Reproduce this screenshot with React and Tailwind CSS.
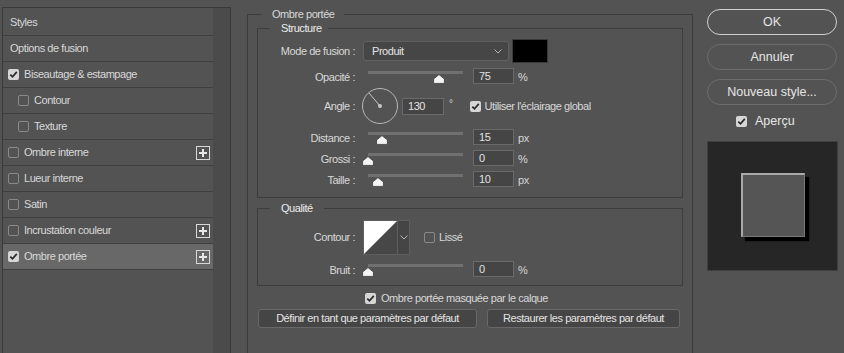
import React from "react";

const LINE = "border-[#3d3d3d]";

function Check({ checked }) {
  if (checked) {
    return (
      <span className="inline-flex w-[11px] h-[11px] shrink-0 items-center justify-center rounded-[2px] bg-[#d6d6d6]">
        <svg width="9" height="9" viewBox="0 0 9 9">
          <path d="M1.3 4.6 L3.5 6.8 L7.8 1.9" fill="none" stroke="#2a2a2a" strokeWidth="1.7" />
        </svg>
      </span>
    );
  }
  return <span className="inline-block w-[11px] h-[11px] shrink-0 rounded-[2px] border border-[#8a8a8a]" />;
}

function PlusBox() {
  return (
    <svg width="14" height="14" viewBox="0 0 14 14" className="shrink-0">
      <rect x="0.5" y="0.5" width="13" height="13" fill="none" stroke="#d8d8d8" />
      <rect x="6" y="3" width="2" height="8" fill="#e6e6e6" />
      <rect x="3" y="6" width="8" height="2" fill="#e6e6e6" />
    </svg>
  );
}

function Chevron() {
  return (
    <svg width="8" height="5" viewBox="0 0 8 5">
      <path d="M0.5 0.5 L4 4 L7.5 0.5" fill="none" stroke="#b5b5b5" strokeWidth="1" />
    </svg>
  );
}

function Row({ label, check, sub, plus, active }) {
  return (
    <div
      className={
        "h-[26px] border-b border-[#3f3f3f] flex items-center pr-[3px] " +
        (active ? "bg-[#686868] " : "") +
        (check === undefined ? "pl-[7px]" : sub ? "pl-[15px]" : "pl-[5px]")
      }
    >
      {check !== undefined && <Check checked={check} />}
      <span className={check !== undefined ? "ml-[5px] flex-1" : "flex-1"}>{label}</span>
      {plus && <PlusBox />}
    </div>
  );
}

function Thumb() {
  return (
    <svg width="12" height="10" viewBox="0 0 12 10">
      <path d="M6 0.6 L11.4 5 L11.4 9.4 L0.6 9.4 L0.6 5 Z" fill="#f4f4f4" stroke="#3a3a3a" strokeWidth="0.8" />
    </svg>
  );
}

function Slider({ pct }) {
  return (
    <div className="relative w-[106px] h-[16px] shrink-0">
      <div className="absolute left-[6px] right-[5px] top-[3px] h-[3px] bg-[#707070]" />
      <div className="absolute top-[6px]" style={{ left: `${pct * 95}px` }}>
        <Thumb />
      </div>
    </div>
  );
}

function Input({ value, w = "w-[41px]", h = "h-[16px]" }) {
  return (
    <div className={`${w} ${h} shrink-0 bg-[#454545] border border-[#6a6a6a] pl-[5px] flex items-center text-[#e2e2e2]`}>
      {value}
    </div>
  );
}

function SliderRow({ label, pct, value, unit, mt }) {
  return (
    <div className={`flex items-start h-[16px] ${mt}`}>
      <div className="w-[97px] text-right leading-[16px] mt-[1px]">{label}</div>
      <div className="ml-[7px]">
        <Slider pct={pct} />
      </div>
      <div className="ml-[5px]">
        <Input value={value} />
      </div>
      <div className="ml-[4px] leading-[16px] mt-[1px]">{unit}</div>
    </div>
  );
}

function Legend({ children, ml, px, bold }) {
  return (
    <legend className={`${ml} ${px} h-[14px] leading-[14px] ${bold ? "text-[#ececec]" : ""}`}>{children}</legend>
  );
}

export default function App() {
  return (
    <div className="w-[844px] h-[353px] overflow-hidden bg-[#535353] flex text-[11px] text-[#d8d8d8] font-['Liberation_Sans',Arial,sans-serif] tracking-[-0.45px]">
      {/* Left panel */}
      <div className="w-[231px] shrink-0 pl-[2px] pt-[7px]">
        <div className="w-[229px] h-[400px] border-l border-t border-r border-[#3a3a3a] flex">
          <div className="w-[210px] pt-[2px]">
            <Row label="Styles" />
            <Row label="Options de fusion" />
            <Row label="Biseautage & estampage" check={true} />
            <Row label="Contour" check={false} sub />
            <Row label="Texture" check={false} sub />
            <Row label="Ombre interne" check={false} plus />
            <Row label="Lueur interne" check={false} />
            <Row label="Satin" check={false} />
            <Row label="Incrustation couleur" check={false} plus />
            <Row label="Ombre portée" check={true} plus active />
          </div>
          <div className="flex-1 bg-[#4b4b4b]" />
        </div>
      </div>

      {/* Middle */}
      <div className="w-[466px] shrink-0 pl-[16px] pt-[7px]">
        <fieldset className={`w-[446px] h-[400px] border ${LINE} px-[9px]`}>
          <Legend ml="ml-[5px]" px="px-[10px]">Ombre portée</Legend>

          <fieldset className={`w-[426px] h-[177px] border ${LINE}`}>
            <Legend ml="ml-[12px]" px="pl-[11px] pr-[6px]" bold>Structure</Legend>

            {/* Mode de fusion */}
            <div className="flex items-center h-[24px] mt-[4px]">
              <div className="w-[97px] text-right">Mode de fusion :</div>
              <div className="ml-[8px] w-[146px] h-[20px] rounded-[3px] bg-[#464646] border border-[#5f5f5f] flex items-center justify-between pl-[8px] pr-[6px] text-[#e4e4e4]">
                <span>Produit</span>
                <Chevron />
              </div>
              <div className="ml-[3px] w-[36px] h-[24px] bg-black border border-[#3a3a3a]" />
            </div>

            <SliderRow label="Opacité :" pct={0.75} value="75" unit="%" mt="mt-[5px]" />

            {/* Angle */}
            <div className="flex items-center h-[36px] mt-[4px]">
              <div className="w-[97px] text-right">Angle :</div>
              <svg width="36" height="36" viewBox="0 0 36 36" className="ml-[7px] shrink-0">
                <circle cx="18" cy="18" r="17.5" fill="none" stroke="#b8b8b8" strokeWidth="1" />
                <line x1="18" y1="18" x2="7" y2="5" stroke="#c8c8c8" strokeWidth="1" />
                <circle cx="18" cy="18" r="2" fill="#c8c8c8" />
              </svg>
              <div className="ml-[4px]">
                <Input value="130" w="w-[42px]" h="h-[17px]" />
              </div>
              <span className="ml-[5px] self-start mt-[8px] text-[10px]">°</span>
              <div className="ml-[17px] flex items-center">
                <Check checked />
                <span className="ml-[4px]">Utiliser l'éclairage global</span>
              </div>
            </div>

            <SliderRow label="Distance :" pct={0.15} value="15" unit="px" mt="mt-[5px]" />
            <SliderRow label="Grossi :" pct={0} value="0" unit="%" mt="mt-[5px]" />
            <SliderRow label="Taille :" pct={0.1} value="10" unit="px" mt="mt-[5px]" />
          </fieldset>

          <fieldset className={`mt-[3px] w-[426px] h-[85px] border ${LINE}`}>
            <Legend ml="ml-[12px]" px="px-[11px]" bold>Qualité</Legend>

            <div className="flex items-center h-[35px] mt-[5px]">
              <div className="w-[97px] text-right">Contour :</div>
              <div className="ml-[8px] flex h-[35px] border border-[#5e5e5e]">
                <svg width="33" height="33" viewBox="0 0 33 33" className="block">
                  <rect width="33" height="33" fill="#474747" />
                  <path d="M0 0 L33 0 L0 33 Z" fill="#ffffff" />
                </svg>
                <div className="w-[12px] bg-[#454545] border-l border-[#5e5e5e] flex items-center justify-center">
                  <Chevron />
                </div>
              </div>
              <div className="ml-[14px] flex items-center">
                <Check checked={false} />
                <span className="ml-[4px]">Lissé</span>
              </div>
            </div>

            <SliderRow label="Bruit :" pct={0} value="0" unit="%" mt="mt-[6px]" />
          </fieldset>

          <div className="mt-[6px] flex items-center h-[12px] pl-[108px]">
            <Check checked />
            <span className="ml-[5px]">Ombre portée masquée par le calque</span>
          </div>

          <div className="mt-[5px] flex h-[19px] pl-[1px]">
            <div className="w-[219px] h-[19px] rounded-[3px] bg-[#454545] border border-[#686868] flex items-center justify-center text-[#e4e4e4]">
              Définir en tant que paramètres par défaut
            </div>
            <div className="ml-[10px] w-[193px] h-[19px] rounded-[3px] bg-[#454545] border border-[#686868] flex items-center justify-center text-[#e4e4e4]">
              Restaurer les paramètres par défaut
            </div>
          </div>
        </fieldset>
      </div>

      {/* Right */}
      <div className="flex-1 pl-[10px] pt-[9px] text-[12.5px] tracking-[0px] text-[#e6e6e6]">
        <div className="w-[130px] h-[26px] rounded-full border border-[#cfcfcf] flex items-center justify-center">OK</div>
        <div className="mt-[9px] w-[130px] h-[26px] rounded-full border border-[#6c6c6c] flex items-center justify-center">Annuler</div>
        <div className="mt-[9px] w-[130px] h-[26px] rounded-full border border-[#6c6c6c] flex items-center justify-center">Nouveau style...</div>
        <div className="mt-[11px] pl-[29px] flex items-center h-[11px]">
          <Check checked />
          <span className="ml-[8px]">Aperçu</span>
        </div>
        <div className="mt-[14px] w-[131px] h-[130px] bg-[#262626] border border-[#404040] flex items-center justify-center">
          <div className="w-[64px] h-[64px] bg-[#555555] border-t-2 border-l-2 border-[#a9a9a9] border-b border-r border-b-[#7a7a7a] border-r-[#7a7a7a] shadow-[4px_4px_1px_#000] -mt-[2px]" />
        </div>
      </div>
    </div>
  );
}
